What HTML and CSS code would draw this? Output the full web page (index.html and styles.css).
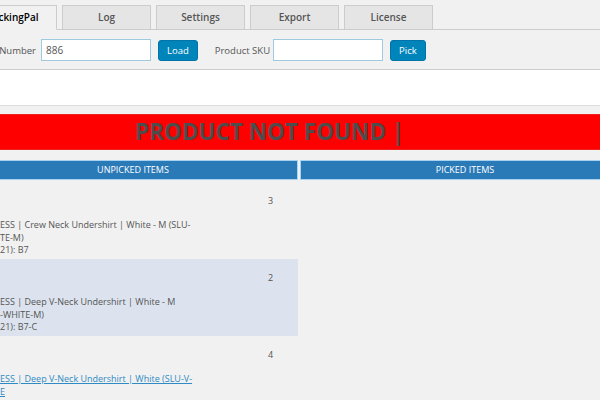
FILE: index.html
```html
<!DOCTYPE html>
<html lang="en">
<head>
	<meta charset="UTF-8">
	<title>PackingPal</title>
	<link rel="stylesheet" href="styles.css">
</head>
<body>
	<div class="wrap">
		<nav class="tabs">
			<a class="tab active">PackingPal</a>
			<a class="tab">Log</a>
			<a class="tab">Settings</a>
			<a class="tab">Export</a>
			<a class="tab">License</a>
		</nav>
		<div class="toolbar">
			<label class="lbl">Number</label>
			<input class="field" type="text" value="886">
			<button class="btn">Load</button>
			<label class="lbl sku">Product SKU</label>
			<input class="field" type="text" value="">
			<button class="btn">Pick</button>
		</div>
		<div class="notes"></div>
		<div class="alert">PRODUCT NOT FOUND |</div>
		<div class="columns">
			<div class="col">
				<h3 class="col-head">Unpicked Items</h3>
				<div class="list">
					<div class="item">
						<div class="item-info">ESS | Crew Neck Undershirt | White - M (SLU-<br>TE-M)<br>21): B7</div>
						<div class="item-qty">3</div>
					</div>
					<div class="item alt">
						<div class="item-info">ESS | Deep V-Neck Undershirt | White - M<br>-WHITE-M)<br>21): B7-C</div>
						<div class="item-qty">2</div>
					</div>
					<div class="item">
						<div class="item-info"><a href="#">ESS | Deep V-Neck Undershirt | White (SLU-V-<br>E</a></div>
						<div class="item-qty">4</div>
					</div>
				</div>
			</div>
			<div class="col">
				<h3 class="col-head">Picked Items</h3>
			</div>
		</div>
	</div>
</body>
</html>
```

FILE: styles.css
```css
html, body {
	margin: 0;
	overflow: hidden;
}
body {
	background-color: #f1f1f1;
	font-family: "Open Sans", "Noto Sans", sans-serif;
	color: #555;
}
.wrap {
	margin-left: -32px;
	width: 662px;
}
.tabs {
	display: flex;
	gap: 5px;
	padding-top: 5px;
	border-bottom: 1px solid #ccc;
}
.tab {
	box-sizing: border-box;
	width: 89px;
	height: 25px;
	margin-bottom: -1px;
	background-color: #e5e5e5;
	border: 1px solid #ccc;
	font-size: 10px;
	font-weight: 600;
	line-height: 23px;
	text-align: center;
	color: #555;
}
.tab.active {
	background-color: #f1f1f1;
	border-bottom-color: #f1f1f1;
	color: #000;
}
.toolbar {
	display: flex;
	align-items: center;
	padding: 9px 0 0 0;
	height: 22px;
}
.lbl {
	font-size: 9.5px;
	color: #555;
	white-space: nowrap;
	width: 68px;
	text-align: right;
	margin-right: 5px;
}
.lbl.sku {
	width: auto;
	margin-left: 17px;
	margin-right: 3px;
}
.field {
	box-sizing: border-box;
	width: 110px;
	height: 22px;
	margin: 0;
	padding: 0 4px;
	border: 1px solid #9fcbe0;
	background: #fff;
	font-family: inherit;
	font-size: 10px;
	color: #555;
}
.btn {
	box-sizing: border-box;
	height: 21px;
	margin-left: 7px;
	padding: 0 8px;
	border: 1px solid #0073aa;
	border-radius: 3px;
	background-color: #0085ba;
	color: #fff;
	font-family: inherit;
	font-size: 9.5px;
}
.notes {
	height: 35px;
	margin-top: 8px;
	background-color: #fff;
	border-top: 1px solid #ccc;
	border-bottom: 1px solid #ddd;
}
.alert {
	margin-top: 8px;
	height: 34px;
	padding-left: 166px;
	background-color: #ff0000;
	border: 1px solid #e22;
	font-size: 22.5px;
	font-weight: 700;
	line-height: 34px;
	color: #4d4d4d;
}
.columns {
	display: flex;
	gap: 2px;
	margin-top: 10px;
}
.col {
	flex: 1;
}
.col-head {
	margin: 0;
	height: 18px;
	background-color: #2b7ab8;
	border: 1px solid #a8d3f0;
	font-size: 9px;
	font-weight: 400;
	line-height: 18px;
	text-transform: uppercase;
	text-align: center;
	color: #fff;
}
.list {
	padding-top: 2px;
}
.item {
	display: flex;
	height: 77px;
	padding-left: 32px;
	font-size: 9px;
	line-height: 12.5px;
	color: #555;
}
.item.alt {
	background-color: #dce3ee;
}
.item-info {
	flex: 1;
	padding-top: 37px;
}
.item-info a {
	color: #2e8bc4;
}
.item-qty {
	width: 30px;
	padding-top: 13px;
}
```
